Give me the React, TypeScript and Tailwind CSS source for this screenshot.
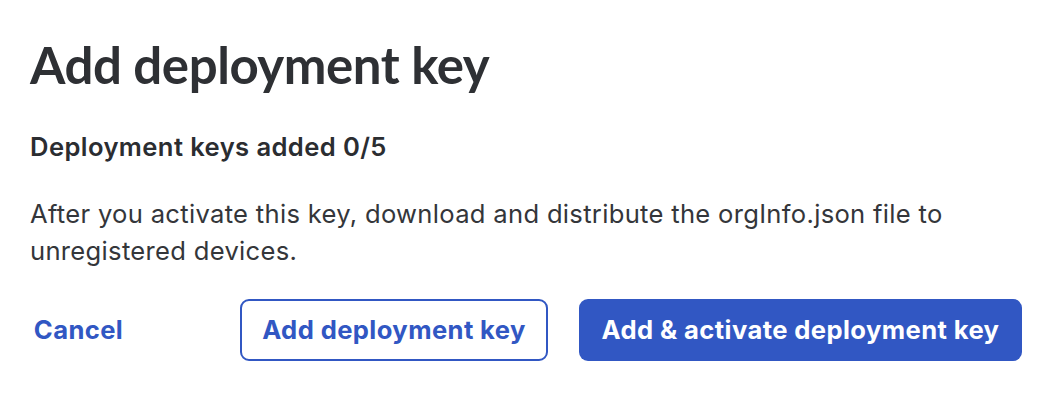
export default function App() {
  return (
    <div className="h-[404px] w-[1042px] bg-white pl-[30px] pt-[33px] font-['Inter',sans-serif] text-[#2b2d31]">
      <h1 className="font-['Lato',sans-serif] text-[51px] font-bold leading-[64px] tracking-[-0.45px] text-[#2e3034]">
        Add deployment key
      </h1>
      <p className="mt-[32px] text-[25.6px] font-semibold leading-[36px] tracking-[0.4px]">
        Deployment keys added 0/5
      </p>
      <p className="mt-[30px] w-[960px] text-[25.6px] leading-[37px] tracking-[0.3px] text-[#34363a]">
        After you activate this key, download and distribute the orgInfo.json
        file to unregistered devices.
      </p>
      <div className="mt-[30px] flex items-center">
        <button className="w-[97px] shrink-0 text-center text-[25.6px] font-bold tracking-[0.4px] text-[#3157c3]">
          Cancel
        </button>
        <button className="ml-[113px] h-[62px] w-[308px] shrink-0 rounded-[9px] border-2 border-[#3157c3] text-[25.6px] font-bold tracking-[0.4px] text-[#3157c3]">
          Add deployment key
        </button>
        <button className="ml-[31px] h-[62px] w-[443px] shrink-0 rounded-[9px] bg-[#3157c3] text-[25.6px] font-bold tracking-[0.4px] text-white">
          Add &amp; activate deployment key
        </button>
      </div>
    </div>
  );
}
